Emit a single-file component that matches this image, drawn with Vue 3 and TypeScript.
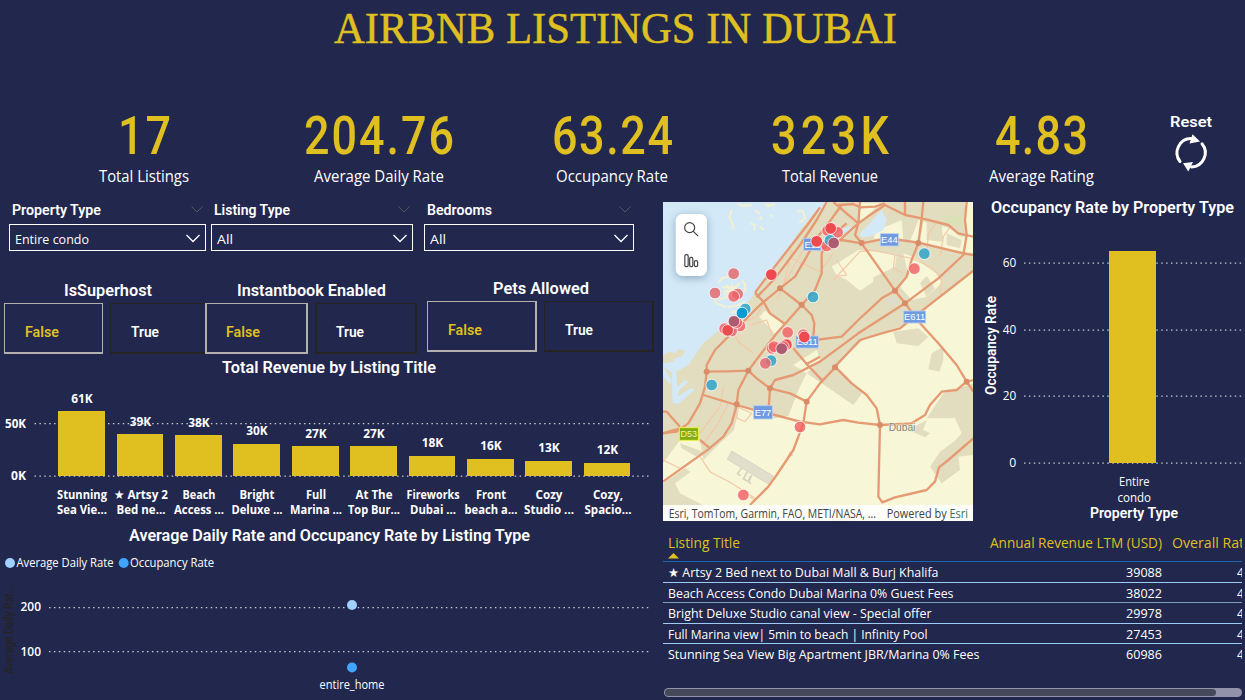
<script setup lang="ts">
import { h } from 'vue'

interface FitProps { t: string; w: number; s: number; h: number; b: number; n?: number }
// A single line of text set to an exact measure; n narrows the glyphs and spaces them out instead.
const FitText = (p: FitProps) =>
  h('svg', { class: 'fit', width: p.w, height: p.h }, [
    h('text', {
      x: 0, y: p.b, 'font-size': p.s,
      transform: p.n ? `scale(${p.n} 1)` : undefined,
      textLength: p.w / (p.n ?? 1),
      lengthAdjust: p.n ? 'spacing' : 'spacingAndGlyphs',
    }, p.t),
  ])
FitText.props = ['t', 'w', 's', 'h', 'b', 'n']

const kpis = [
  { value: '17', vw: 53, label: 'Total Listings', lw: 90 },
  { value: '204.76', vw: 150, label: 'Average Daily Rate', lw: 130 },
  { value: '63.24', vw: 121, label: 'Occupancy Rate', lw: 112 },
  { value: '323K', vw: 118, label: 'Total Revenue', lw: 96 },
  { value: '4.83', vw: 93, label: 'Average Rating', lw: 105 },
]
const slicers = [
  { cls: 's1', title: 'Property Type', tw: 89, value: 'Entire condo', vw: 74 },
  { cls: 's2', title: 'Listing Type', tw: 76, value: 'All', vw: 16 },
  { cls: 's3', title: 'Bedrooms', tw: 65, value: 'All', vw: 16 },
]
const toggles = [
  { cls: 't1', title: 'IsSuperhost', tw: 88 },
  { cls: 't2', title: 'Instantbook Enabled', tw: 149 },
  { cls: 't3', title: 'Pets Allowed', tw: 96 },
]
const bars = [
  { x: 58, w: 47, top: 411, v: '61K', vy: 403, a: 'Stunning', aw: 50, b: 'Sea Vie...', bw: 50 },
  { x: 117, w: 46, top: 434, v: '39K', vy: 426, a: '★ Artsy 2', aw: 54, b: 'Bed ne...', bw: 49 },
  { x: 175, w: 47, top: 435, v: '38K', vy: 427, a: 'Beach', aw: 33, b: 'Access ...', bw: 50 },
  { x: 233, w: 47, top: 444, v: '30K', vy: 435, a: 'Bright', aw: 35, b: 'Deluxe ...', bw: 51 },
  { x: 292, w: 47, top: 446, v: '27K', vy: 438, a: 'Full', aw: 20, b: 'Marina ...', bw: 52 },
  { x: 350, w: 47, top: 446, v: '27K', vy: 438, a: 'At The', aw: 37, b: 'Top Bur...', bw: 52 },
  { x: 409, w: 46, top: 456, v: '18K', vy: 447, a: 'Fireworks', aw: 53, b: 'Dubai ...', bw: 46 },
  { x: 467, w: 47, top: 459, v: '16K', vy: 450, a: 'Front', aw: 30, b: 'beach a...', bw: 53 },
  { x: 525, w: 47, top: 461, v: '13K', vy: 452, a: 'Cozy', aw: 27, b: 'Studio ...', bw: 50 },
  { x: 584, w: 46, top: 463, v: '12K', vy: 454, a: 'Cozy,', aw: 30, b: 'Spacio...', bw: 47 },
]
const occTicks = [
  { v: '60', y: 263, w: 13.5 }, { v: '40', y: 330, w: 13.5 }, { v: '20', y: 396, w: 13.5 }, { v: '0', y: 463, w: 7 },
]
const rows = [
  { t: '★ Artsy 2 Bed next to Dubai Mall & Burj Khalifa', w: 270.5, n: '39088' },
  { t: 'Beach Access Condo Dubai Marina 0% Guest Fees', w: 285.5, n: '38022' },
  { t: 'Bright Deluxe Studio canal view - Special offer', w: 263.5, n: '29978' },
  { t: 'Full Marina view| 5min to beach | Infinity Pool', w: 259.5, n: '27453' },
  { t: 'Stunning Sea View Big Apartment JBR/Marina 0% Fees', w: 311.5, n: '60986' },
]

const cream = [
  '940,215 795,325 735,375 615,415 535,490 525,503 610,575 580,615 485,550 440,520 415,570 385,648 345,655 240,615 222,690 180,730 130,780 120,720 60,720 9,790 9,963 939,963',
  '315,332 372,372 345,402 298,350', '515,200 595,150 645,155 710,165 705,200 640,232 640,245 600,272 560,240 530,225',
  '650,90 690,75 725,60 730,120 640,115', '790,65 870,85 900,110 915,110 915,6 940,6 940,160 880,150 780,125',
  '730,160 760,170 800,200 835,225 845,250 800,290 755,300 720,260 745,225', '600,10 660,10 610,60 597,60',
  '760,100 775,60 785,62 780,128 750,122', '400,495 470,450 480,480 440,520',
]
const urban = [
  '700,395 775,385 805,410 775,438 710,430', '815,460 850,440 850,480 838,515 805,508',
  '940,550 850,580 800,655 885,655 905,700 885,722 840,755 810,800 845,850 900,810 895,770 940,765',
  '745,690 800,660 790,690 810,700 795,712', '9,850 75,805 92,815 45,850 60,880 128,915 9,918',
  '60,730 130,755 110,770 65,745', '780,250 800,228 825,265 800,290', '130,730 165,675 185,690 150,735',
  '660,365 700,345 720,355 680,378', '800,65 845,75 850,125 800,120', '860,100 905,120 900,145 860,135',
]
const water = [
  '600,100 625,75 665,30 680,60 670,90 630,110 605,112', '35,500 48,500 52,560 75,540 85,546 58,570 52,590 95,563 103,570 55,612 38,608',
  '9,500 35,540 30,552 9,530', '500,96 575,80 580,92 520,106', '465,6 500,6 475,40',
]
const roads = [
  '480,22 440,78 395,135 330,218 285,278', '500,6 470,60 420,135 345,235 290,292', '545,15 505,70 470,115 440,170 405,230 360,265 300,315 220,395 165,450 140,495 140,515 135,560 120,610 85,670 50,695 9,700',
  '285,278 310,305 330,340 375,372 425,315 465,270 485,220 485,160 510,110 560,70', '360,265 425,315 455,345 463,370 460,410',
  '375,372 350,400 300,465 265,512 235,570 230,615 215,670 190,710 145,748 9,845', '140,515 200,514 265,512 290,535 330,565 390,580 440,605',
  '130,585 230,615 300,635 345,645 420,665 480,673 495,670 550,660 595,668 660,675 755,670 795,645 810,615 845,575 890,570 920,545 940,540',
  '525,503 480,550 440,605 430,670 400,750 350,825 325,860 270,915', '525,500 600,420 665,400 720,385 795,325 940,212',
  '525,500 575,550 620,585 650,625 660,675 655,890 667,907 705,892 800,870 825,845 837,802 865,780 940,715',
  '325,640 330,565 345,540 400,525 480,485 595,400 735,310 835,235 910,165 920,105 915,60 920,6', '420,430 465,420 545,410 595,360 665,295 705,272 740,230 755,180 775,130 785,55 790,6',
  '470,150 545,120 605,130 665,118 720,120 775,128 910,160 940,165', '605,130 705,272 735,310 785,375 835,430 890,495 920,545 940,575',
  '600,6 595,70 585,105 605,130', '595,70 630,45 675,15 735,45 785,55 865,75 895,100 940,110', '735,6 735,45', '520,6 595,70 550,110 510,150', '535,15 580,12 600,22 645,20 675,10',
  '9,635 20,635 60,680', '120,720 150,745', '9,700 60,685', '400,445 440,492 480,470', '440,492 490,545',
]
const minor = [
  '520,240 600,155 640,150 705,165 700,205 730,220', '215,395 240,430 280,460', '190,560 180,620 120,700', '205,610 175,670 135,725',
  '270,375 320,360 345,430', '395,150 370,260', '705,165 755,175 820,205 845,240 840,270 845,290', '835,60 805,100 800,170', '840,170 850,110 875,75',
  '120,770 150,815 215,850 285,895', '385,170 480,215 520,160', '9,780 60,805', '530,180 560,225 525,230', '430,150 400,200 350,300', '310,310 290,350 240,370',
  '228,620 232,655 255,665 275,640 235,622', '390,755 385,770 400,765', '270,890 285,900',
]
const shoals = [
  '215,30 208,50 218,75 218,88', '235,10 245,18 275,15', '270,70 285,75 282,92', '300,80 312,90', '320,20 345,12', '285,30 300,42', '410,35 428,32 435,55 418,68', '330,45 338,50', '305,50 300,60', '315,14 330,15',
  '175,250 185,235 205,230', '160,290 170,310 200,322', '245,240 255,252 256,275', '190,285 240,250', '200,255 215,275', '205,270 190,275', '215,250 220,290', '175,300 225,280', '185,262 230,262', '205,322 235,315 255,305', '212,338 240,330',
]
type Pin = [number, number, string]
const pins: Pin[] = [
  [221, 221, 'p'], [165, 279, 'p'], [233, 282, 'p'], [221, 289, 'r'], [334, 224, 'R'], [459, 291, 'b'], [256, 327, 'b'],
  [240, 378, 'r'], [215, 393, 'p'], [194, 386, 'r'], [203, 391, 'R'], [230, 368, 'r'], [246, 339, 'B'], [222, 364, 'd'],
  [383, 397, 'r'], [430, 404, 'r'], [433, 411, 'R'], [336, 445, 'r'], [342, 440, 'r'], [379, 434, 'R'], [370, 440, 'r'], [365, 446, 'd'], [333, 482, 'b'], [316, 490, 'p'],
  [533, 97, 'r'], [503, 92, 'r'], [500, 138, 'r'], [512, 85, 'R'], [470, 124, 'R'], [510, 121, 'b'], [521, 129, 'd'],
  [793, 161, 'b'], [763, 206, 'r'], [155, 555, 'b'], [420, 681, 'r'], [250, 885, 'r'],
]
const junctions = [
  [140, 515], [265, 512], [230, 613], [330, 565], [440, 605], [525, 502], [705, 272], [735, 310], [775, 129],
  [605, 129], [360, 265], [425, 314], [920, 545], [660, 675],
]
const shields = [
  { x: 431, y: 115, w: 52, h: 36, t: 'E11' }, { x: 661, y: 101, w: 54, h: 37, t: 'E44' }, { x: 731, y: 333, w: 66, h: 36, t: 'E611' },
  { x: 408, y: 408, w: 67, h: 36, t: 'E311' }, { x: 281, y: 617, w: 56, h: 40, t: 'E77' },
]
</script>

<template>
  <main class="report">
    <header class="title"><FitText t="AIRBNB LISTINGS IN DUBAI" :w="563" :s="44" :h="50" :b="43" /></header>

    <section class="kpis">
      <div v-for="k in kpis" :key="k.label" class="kpi">
        <FitText class="din value" :t="k.value" :w="k.vw" :s="53.5" :h="60" :b="54" :n="0.84" />
        <FitText :t="k.label" :w="k.lw" :s="15.6" :h="24" :b="22" />
      </div>
      <div class="reset">
        <FitText class="din bold" t="Reset" :w="42" :s="15.5" :h="20" :b="17" />
        <svg width="40" height="44" viewBox="0 0 40 44">
          <g fill="none" stroke="#fff" stroke-width="3" stroke-linecap="round">
            <path d="M9 31.5A14.2 14.2 0 0 1 20 8.6" /><path d="M31 13.8A14.2 14.2 0 0 1 20.5 37" />
          </g>
          <path d="M21.5 4.2L29 11.5L18.5 13.5Z" fill="#fff" /><path d="M12 33.3L22 32L17.3 41.5Z" fill="#fff" />
        </svg>
      </div>
    </section>

    <section class="body">
      <div class="left">
        <div class="slicers">
          <div v-for="s in slicers" :key="s.title" class="slicer" :class="s.cls">
            <div class="shead">
              <FitText class="din bold" :t="s.title" :w="s.tw" :s="14" :h="22" :b="15" />
              <svg width="12" height="7" viewBox="0 0 12 7"><path d="M.5 .5L6 6L11.5 .5" fill="none" stroke="#55565c" /></svg>
            </div>
            <div class="select">
              <FitText :t="s.value" :w="s.vw" :s="13.3" :h="24" :b="19" />
              <svg width="14" height="9" viewBox="0 0 14 9"><path d="M.5 1L7 7.5L13.5 1" fill="none" stroke="#fff" stroke-width="1.3" /></svg>
            </div>
          </div>
        </div>

        <div class="toggles">
          <div v-for="g in toggles" :key="g.title" class="toggle" :class="g.cls">
            <FitText class="din bold heading" :t="g.title" :w="g.tw" :s="15.7" :h="23" :b="16" />
            <div class="tiles">
              <div class="tile on"><FitText class="din bold" t="False" :w="34" :s="14" :h="20" :b="15" /></div>
              <div class="tile"><FitText class="din bold" t="True" :w="28" :s="14" :h="20" :b="15" /></div>
            </div>
          </div>
        </div>

        <svg class="chart" width="655" height="168" viewBox="0 356 655 168">
          <text class="din bold" x="222" y="373" font-size="15.7" textLength="214" lengthAdjust="spacingAndGlyphs">Total Revenue by Listing Title</text>
          <path class="grid" d="M34.5 423.7H651" />
          <g fill="#dfc020"><rect v-for="b in bars" :key="b.x" :x="b.x" :y="b.top" :width="b.w" :height="476 - b.top" /></g>
          <path class="grid" d="M34.5 476.2H651" />
          <g class="semi" font-size="12.4">
            <text x="5" y="428" textLength="21" lengthAdjust="spacingAndGlyphs">50K</text>
            <text x="11" y="480" textLength="15" lengthAdjust="spacingAndGlyphs">0K</text>
            <g v-for="b in bars" :key="b.x">
              <text :x="b.x + b.w / 2 - 10.3" :y="b.vy" textLength="21.5" lengthAdjust="spacingAndGlyphs">{{ b.v }}</text>
              <text :x="b.x + 24 - b.aw / 2" y="499" :textLength="b.aw" lengthAdjust="spacingAndGlyphs">{{ b.a }}</text>
              <text :x="b.x + 24 - b.bw / 2" y="514" :textLength="b.bw" lengthAdjust="spacingAndGlyphs">{{ b.b }}</text>
            </g>
          </g>
        </svg>

        <svg class="chart" width="655" height="176" viewBox="0 524 655 176">
          <text class="din bold" x="129" y="541" font-size="15.7" textLength="401" lengthAdjust="spacingAndGlyphs">Average Daily Rate and Occupancy Rate by Listing Type</text>
          <circle cx="10" cy="563" r="5" fill="#a0d1ff" /><circle cx="123.7" cy="563" r="5" fill="#41a4ff" />
          <g font-size="12.2">
            <text x="16.5" y="567" textLength="97" lengthAdjust="spacingAndGlyphs">Average Daily Rate</text>
            <text x="130" y="567" textLength="84" lengthAdjust="spacingAndGlyphs">Occupancy Rate</text>
            <text x="20.5" y="611" textLength="20.5" lengthAdjust="spacingAndGlyphs" class="med">200</text>
            <text x="20.5" y="656" textLength="20.5" lengthAdjust="spacingAndGlyphs" class="med">100</text>
            <text x="319.5" y="689" textLength="65" lengthAdjust="spacingAndGlyphs">entire_home</text>
          </g>
          <text class="din axis" transform="translate(13 674) rotate(-90)" font-size="12" textLength="89" lengthAdjust="spacingAndGlyphs">Average Daily Rat...</text>
          <path class="grid" d="M49 607.6H651M49 651.7H651" />
          <circle cx="352" cy="605" r="5" fill="#a0d1ff" /><circle cx="352" cy="667.5" r="5" fill="#41a4ff" />
        </svg>
      </div>

      <div class="right">
        <div class="upper">
          <svg class="map" width="310" height="319" viewBox="9 6 930 957">
            <rect x="9" y="6" width="930" height="957" fill="#e3ddbf" />
            <polygon fill="#d3e9f8" points="9,6 490,6 425,85 345,200 285,280 235,340 185,385 130,430 85,495 40,520 9,500" />
            <polygon fill="#e3ddbf" points="9,465 30,455 45,460 55,447 75,452 68,468 45,475 40,485 9,490" />
            <polygon v-for="p in cream" :key="p" :points="p" fill="#f7f6d6" />
            <polygon v-for="p in urban" :key="p" :points="p" fill="#e3ddbf" />
            <polygon points="845,45 900,50 910,82 860,75" fill="#dce0b6" />
            <polygon v-for="p in water" :key="p" :points="p" fill="#d3e9f8" />
            <polygon points="675,300 700,285 715,305 692,322" fill="#dedccb" />
            <g fill="none" stroke="#f3f0cf" stroke-width="6" stroke-linejoin="round"><polyline v-for="p in shoals" :key="p" :points="p" /></g>
            <polygon points="215,753 340,828 325,852 202,778" fill="#e1dfcb" stroke="#cfcdbd" stroke-width="2" />
            <path d="M245 805l-12 15l8 8M262 815l-12 22l12 6M275 825l-8 18M270 830l-5 15l8 6" fill="none" stroke="#d3d1c0" stroke-width="5" />
            <g fill="none" stroke="#f4c8a8" stroke-width="3.5" stroke-linejoin="round"><polyline v-for="p in minor" :key="p" :points="p" /></g>
            <g fill="none" stroke="#e59a74" stroke-width="7" stroke-linejoin="round"><polyline v-for="p in roads" :key="p" :points="p" /></g>
            <g fill="#d98c68"><circle v-for="(j, i) in junctions" :key="i" :cx="j[0]" :cy="j[1]" r="9" /></g>
            <g v-for="s in shields" :key="s.t">
              <rect :x="s.x" :y="s.y" :width="s.w" :height="s.h" fill="#6f9be4" stroke="#b9cff2" stroke-width="2.5" />
              <text class="liberation" :x="s.x + s.w / 2" :y="s.y + s.h / 2 + 10" text-anchor="middle" font-size="28" fill="#fff">{{ s.t }}</text>
            </g>
            <rect x="58" y="683" width="57" height="38" fill="#80ad0c" stroke="#f0f04c" stroke-width="3" />
            <text class="liberation" x="86" y="712" text-anchor="middle" font-size="27" fill="#f5f5b0">D53</text>
            <text class="liberation city" x="686" y="692" font-size="32" textLength="80" lengthAdjust="spacingAndGlyphs">Dubai</text>
            <circle v-for="(p, i) in pins" :key="i" :cx="p[0]" :cy="p[1]" r="17.5" class="pin" :class="'pin-' + p[2]" />
            <rect class="tools" x="47" y="42" width="94" height="186" rx="20" fill="#fff" />
            <g fill="none" stroke="#404040" stroke-width="3.5" stroke-linecap="round">
              <circle cx="89" cy="83" r="15" /><path d="M100 94L113 107" />
              <rect x="74.5" y="164" width="10" height="36" rx="4" /><rect x="89" y="172" width="9.5" height="28" rx="4" /><rect x="103" y="182" width="10" height="18" rx="5" />
            </g>
            <rect x="515" y="930" width="55" height="33" fill="#dcebb0" />
            <rect x="9" y="915" width="930" height="48" fill="#fff" opacity=".84" />
            <g font-size="37" class="credit">
              <text x="26" y="954" textLength="622" lengthAdjust="spacingAndGlyphs">Esri, TomTom, Garmin, FAO, METI/NASA, ...</text>
              <text x="680" y="954" textLength="244" lengthAdjust="spacingAndGlyphs">Powered by <tspan class="esri">Esri</tspan></text>
            </g>
          </svg>

          <svg class="chart" width="272" height="334" viewBox="973 196 272 334">
            <text class="din bold" x="991" y="213" font-size="15.7" textLength="243" lengthAdjust="spacingAndGlyphs">Occupancy Rate by Property Type</text>
            <g v-for="t in occTicks" :key="t.v">
              <text :x="1016.2 - t.w" :y="t.y + 4" font-size="12.2" :textLength="t.w" lengthAdjust="spacingAndGlyphs">{{ t.v }}</text>
              <path class="grid" :d="`M1024 ${t.y + 0.2}H1242`" />
            </g>
            <rect x="1109" y="251" width="47" height="212" fill="#dfc020" />
            <text x="1119" y="486" font-size="12.2" textLength="30.5" lengthAdjust="spacingAndGlyphs">Entire</text>
            <text x="1117.5" y="502" font-size="12.2" textLength="33.5" lengthAdjust="spacingAndGlyphs">condo</text>
            <text class="din bold" x="1090" y="518" font-size="14" textLength="88" lengthAdjust="spacingAndGlyphs">Property Type</text>
            <text class="din bold" transform="translate(996 395) rotate(-90)" font-size="14" textLength="99" lengthAdjust="spacingAndGlyphs">Occupancy Rate</text>
          </svg>
        </div>

        <div class="table">
          <div class="thead">
            <div class="c1">
              <FitText t="Listing Title" :w="72" :s="14" :h="21" :b="16" />
              <svg width="12" height="6" viewBox="0 0 12 6"><path d="M0 5.5L5.5 0L11 5.5Z" fill="#dfc020" /></svg>
            </div>
            <div class="c2"><FitText t="Annual Revenue LTM (USD)" :w="172" :s="14" :h="21" :b="16" /></div>
            <div class="c3"><FitText t="Overall Rating" :w="92" :s="14" :h="21" :b="16" /></div>
          </div>
          <div v-for="r in rows" :key="r.n" class="trow">
            <div class="c1"><FitText :t="r.t" :w="r.w" :s="12.6" :h="19" :b="14.8" /></div>
            <div class="c2"><FitText :t="r.n" :w="36" :s="12.6" :h="19" :b="14.8" /></div>
            <div class="c3 num"><FitText t="4.83" :w="24" :s="12.6" :h="19" :b="14.8" /></div>
          </div>
        </div>
        <div class="scroll"><div class="thumb"></div></div>
      </div>
    </section>
  </main>
</template>

<style>
html, body { background: #22274e; overflow: hidden; }
.fit { display: block; overflow: visible; flex: none; }
</style>

<style scoped>
.report { width: 1245px; height: 700px; overflow: hidden; background: #22274e; color: #fff; font-family: "Open Sans", "Noto Sans", "DejaVu Sans", sans-serif; font-weight: 470; }
.report svg { display: block; fill: currentColor; flex: none; }
.din { font-family: Roboto, "Liberation Sans", sans-serif; }
.bold { font-weight: 600; }
.title { height: 100px; padding-left: 334px; font-family: "Liberation Serif", serif; color: #dfc020; box-sizing: border-box; }
.title .fit { stroke: #dfc020; stroke-width: .5px; }
.kpis { display: grid; grid-template-columns: 235px 233px 218px 211px 180px 100px; padding-left: 64px; height: 96px; box-sizing: border-box; }
.kpi { width: 160px; display: flex; flex-direction: column; align-items: center; }
.value { color: #dfc020; font-weight: 500; }
.reset { display: flex; flex-direction: column; align-items: center; padding-top: 10px; width: 100px; }
.body { display: flex; height: 504px; }
.left { width: 655px; }
.slicers { display: flex; height: 84px; padding: 4px 0 0 9px; box-sizing: border-box; }
.s1 { width: 197px; margin-right: 5px; }
.s2 { width: 202px; margin-right: 11px; }
.s3 { width: 210px; }
.shead { display: flex; justify-content: space-between; height: 24px; padding: 0 3px; }
.shead > svg:last-child { margin-top: 6px; }
.select { height: 27px; border: 1px solid #fff; box-sizing: border-box; display: flex; justify-content: space-between; padding: 0 5px; }
.select > svg:last-child { margin-top: 9px; }
.toggles { display: flex; height: 76px; padding-left: 4px; box-sizing: border-box; }
.toggle { display: flex; flex-direction: column; align-items: center; }
.t1 { width: 202px; margin-right: -1px; }
.t2 { width: 212px; margin-right: 10px; position: relative; }
.t3 { width: 227px; margin-top: -2px; }
.t1 > .heading { margin-left: 6px; }
.tiles { display: flex; gap: 7px; width: 100%; height: 51px; }
.tile { flex: 1; border: 1px solid #252423; border-width: 1px 2px 2px 1px; box-sizing: border-box; padding: 18px 0 0 20px; }
.tile.on { border-color: #b3b0ad; color: #dfc020; }
.t2 .tile { border-left-width: 2px; padding-left: 19px; }
.t1 .tile { border-right-width: 0; }
.t1 .tile.on { flex: 0 0 99px; border-right-width: 1px; }
.t2 .tile.on { flex: 0 0 103px; }
.grid { fill: none; stroke: #c8c9d2; stroke-width: 1.2; stroke-dasharray: 1.5 3.4; }
.semi { font-weight: 700; }
.med { font-weight: 550; }
.axis { fill: #252423; }
.right { flex: 1; padding-left: 8px; }
.upper { display: flex; height: 334px; }
.map { margin-top: 6px; }
.pin { stroke: #fff; stroke-opacity: .75; stroke-width: 3; }
.pin-p { fill: #e46a70; fill-opacity: .85; }
.pin-r { fill: #f15e62; fill-opacity: .8; }
.pin-R { fill: #ee4a50; }
.pin-b { fill: #35a5c8; fill-opacity: .88; }
.pin-B { fill: #0b9bd3; }
.pin-d { fill: #ac5b70; }
.liberation { font-family: "Liberation Sans", sans-serif; }
.city { fill: #85857d; stroke: #f7f6d6; stroke-width: 3; paint-order: stroke; }
.tools { filter: drop-shadow(0 6px 12px rgba(60, 90, 120, .45)); }
.credit { fill: #424242; font-weight: 400; }
.esri { fill: #2f7468; }
.table { width: 579px; height: 138px; overflow: hidden; padding-top: 2px; box-sizing: border-box; }
.thead { height: 29px; border-bottom: 1px solid #1b68b0; color: #dfc020; }
.thead, .trow { display: flex; }
.c1 { width: 320px; padding-left: 5.2px; flex: none; }
.c2 { width: 173.500px; flex: none; display: flex; justify-content: flex-end; }
.c3 { width: 69px; padding-left: 10px; flex: none; }
.num { width: 4px; padding-left: 75px; }
.trow { height: 19.5px; border-bottom: 1px solid #9ccbf5; }
.trow:last-child { border: 0; }
.trow:nth-child(3) { border-color: #7f9dc0; }
.scroll { width: 578px; height: 9px; margin: 20px 0 0 1px; border-radius: 5px; background: #9293aa; padding: 1px; box-sizing: border-box; }
.thumb { width: 551px; height: 7px; border-radius: 4px; background: #444859; }
</style>
